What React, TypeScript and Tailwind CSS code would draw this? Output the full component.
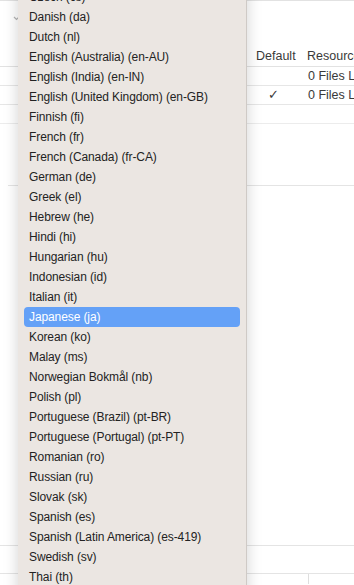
const languages = [
  "Czech (cs)",
  "Danish (da)",
  "Dutch (nl)",
  "English (Australia) (en-AU)",
  "English (India) (en-IN)",
  "English (United Kingdom) (en-GB)",
  "Finnish (fi)",
  "French (fr)",
  "French (Canada) (fr-CA)",
  "German (de)",
  "Greek (el)",
  "Hebrew (he)",
  "Hindi (hi)",
  "Hungarian (hu)",
  "Indonesian (id)",
  "Italian (it)",
  "Japanese (ja)",
  "Korean (ko)",
  "Malay (ms)",
  "Norwegian Bokmål (nb)",
  "Polish (pl)",
  "Portuguese (Brazil) (pt-BR)",
  "Portuguese (Portugal) (pt-PT)",
  "Romanian (ro)",
  "Russian (ru)",
  "Slovak (sk)",
  "Spanish (es)",
  "Spanish (Latin America) (es-419)",
  "Swedish (sv)",
  "Thai (th)",
  "Turkish (tr)",
  "Ukrainian (uk)",
];

const selected = "Japanese (ja)";

export default function App() {
  return (
    <div
      className="relative w-[354px] h-[585px] overflow-hidden bg-white text-[#232323]"
      style={{ fontFamily: '"Liberation Sans", Arial, sans-serif' }}
    >
      {/* Window content behind the menu */}
      <div className="flex flex-col">
        <div className="h-px bg-[#e2e2e2]" />
        <div className="h-[45px]" />
        {/* Table header */}
        <div className="flex h-[21px] items-center text-[12.5px] text-[#3a3a3a] border-b border-[#e2e2e2]">
          <div className="w-[249px] shrink-0" />
          <div className="w-px h-[15px] bg-[#dcdcdc]" />
          <div className="w-[52px] shrink-0 pl-[7px]">Default</div>
          <div className="w-px h-[15px] bg-[#dcdcdc]" />
          <div className="pl-[6px] whitespace-nowrap">Resources</div>
        </div>
        {/* Rows */}
        <div className="flex h-[19px] items-center text-[12.5px] text-[#3a3a3a] border-b border-[#e6e6e6]">
          <div className="w-[302px] shrink-0" />
          <div className="pl-[6px] whitespace-nowrap">0 Files Localized</div>
        </div>
        <div className="flex h-[19px] items-center text-[12.5px] text-[#3a3a3a] border-b border-[#e6e6e6]">
          <div className="w-[268px] shrink-0" />
          <div className="w-[34px] shrink-0 text-[13px]">✓</div>
          <div className="pl-[6px] whitespace-nowrap">0 Files Localized</div>
        </div>
        <div className="h-[19px] border-b border-[#ececec]" />
        <div className="h-[62px] border-b border-[#e4e4e4] ml-[8px]" />
        <div className="h-[360px] border-b border-[#e4e4e4]" />
        <div className="flex h-[28px] border-b border-[#e4e4e4]" />
        <div className="flex h-[10px]">
          <div className="w-[309px] shrink-0 border-r border-[#dedede]" />
        </div>
      </div>

      {/* small disclosure chevron peeking out on the left */}
      <svg
        className="absolute left-[12px] top-[14px]"
        width="8"
        height="8"
        viewBox="0 0 8 8"
        fill="none"
        stroke="#b5b5b5"
        strokeWidth="1.2"
      >
        <path d="M2 3l2.5 2.5L7 3" />
      </svg>

      {/* Language pop-up menu */}
      <div className="absolute left-[18px] top-[-13px] w-[229px] h-[640px] bg-[#ebe6e2] border-r border-[#cfcac6] shadow-[0_0_14px_rgba(0,0,0,0.18)]">
        <ul className="flex flex-col px-[6px]">
          {languages.map((lang) => {
            const isSel = lang === selected;
            return (
              <li
                key={lang}
                className={
                  isSel
                    ? "h-[20px] flex items-center pl-[5px] rounded-[4px] bg-[#64a1f7] text-white text-[12px] tracking-[-0.1px] whitespace-nowrap"
                    : "h-[20px] flex items-center pl-[5px] text-[12px] tracking-[-0.1px] text-[#232323] whitespace-nowrap"
                }
              >
                {lang}
              </li>
            );
          })}
        </ul>
      </div>
    </div>
  );
}
